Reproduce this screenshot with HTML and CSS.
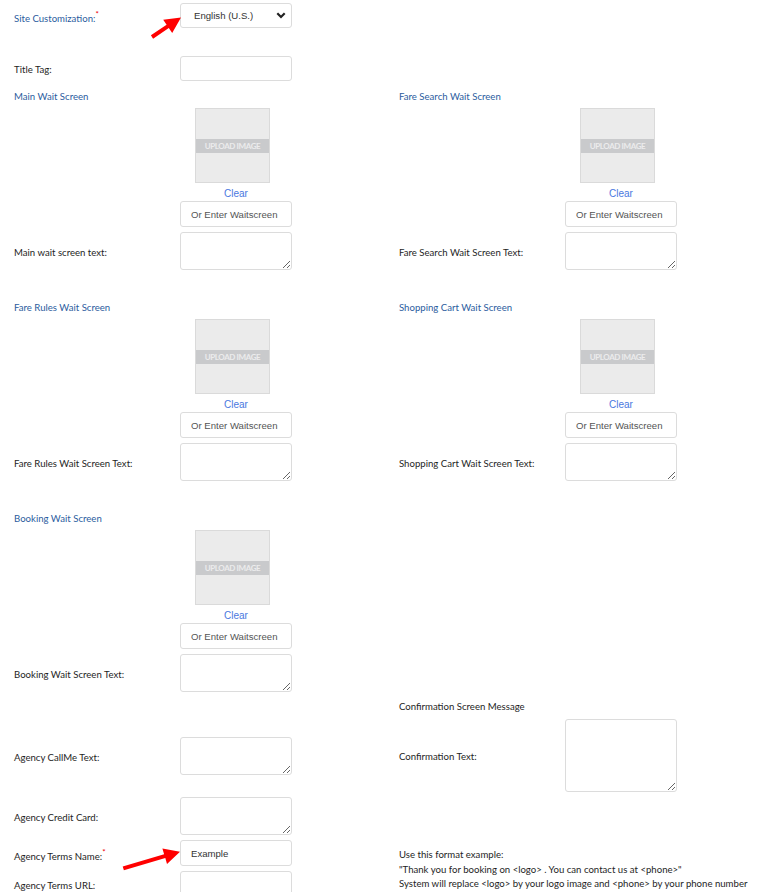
FILE: index.html
```html
<!DOCTYPE html>
<html lang="en">
<head>
    <meta charset="UTF-8">
    <meta name="viewport" content="width=device-width, initial-scale=1.0">
    <title>Site Customization</title>
    <link rel="stylesheet" href="styles.css">
</head>
<body>
<div class="page">
    <div class="row">
        <div class="lbl blue">Site Customization:<span class="req">*</span></div>
        <div class="select-box">
            <span>English (U.S.)</span>
            <svg class="chev" width="10" height="7" viewBox="0 0 10 7"><path d="M1.3 1.3 L5 5 L8.7 1.3" fill="none" stroke="#222" stroke-width="2.2"/></svg>
        </div>
    </div>

    <div class="row title-row">
        <div class="lbl">Title Tag:</div>
        <input class="txt" type="text">
    </div>

    <div class="pair">
        <div class="wait-block">
            <div class="sec-title">Main Wait Screen</div>
            <div class="upload">
                <div class="up-box"><span>UPLOAD IMAGE</span></div>
                <a class="clear">Clear</a>
                <input class="txt tall" type="text" placeholder="Or Enter Waitscreen">
            </div>
            <div class="row area-row">
                <div class="lbl">Main wait screen text:</div>
                <textarea class="area"></textarea>
            </div>
        </div>
        <div class="wait-block">
            <div class="sec-title">Fare Search Wait Screen</div>
            <div class="upload">
                <div class="up-box"><span>UPLOAD IMAGE</span></div>
                <a class="clear">Clear</a>
                <input class="txt tall" type="text" placeholder="Or Enter Waitscreen">
            </div>
            <div class="row area-row">
                <div class="lbl">Fare Search Wait Screen Text:</div>
                <textarea class="area"></textarea>
            </div>
        </div>
    </div>

    <div class="pair">
        <div class="wait-block">
            <div class="sec-title">Fare Rules Wait Screen</div>
            <div class="upload">
                <div class="up-box"><span>UPLOAD IMAGE</span></div>
                <a class="clear">Clear</a>
                <input class="txt tall" type="text" placeholder="Or Enter Waitscreen">
            </div>
            <div class="row area-row">
                <div class="lbl">Fare Rules Wait Screen Text:</div>
                <textarea class="area"></textarea>
            </div>
        </div>
        <div class="wait-block">
            <div class="sec-title">Shopping Cart Wait Screen</div>
            <div class="upload">
                <div class="up-box"><span>UPLOAD IMAGE</span></div>
                <a class="clear">Clear</a>
                <input class="txt tall" type="text" placeholder="Or Enter Waitscreen">
            </div>
            <div class="row area-row">
                <div class="lbl">Shopping Cart Wait Screen Text:</div>
                <textarea class="area"></textarea>
            </div>
        </div>
    </div>

    <div class="pair">
        <div class="wait-block">
            <div class="sec-title">Booking Wait Screen</div>
            <div class="upload">
                <div class="up-box"><span>UPLOAD IMAGE</span></div>
                <a class="clear">Clear</a>
                <input class="txt tall" type="text" placeholder="Or Enter Waitscreen">
            </div>
            <div class="row area-row">
                <div class="lbl">Booking Wait Screen Text:</div>
                <textarea class="area"></textarea>
            </div>
        </div>
        <div></div>
    </div>

    <div class="pair last">
        <div class="left-stack">
            <div class="row">
                <div class="lbl">Agency CallMe Text:</div>
                <textarea class="area"></textarea>
            </div>
            <div class="row credit">
                <div class="lbl">Agency Credit Card:</div>
                <textarea class="area"></textarea>
            </div>
            <div class="row small-gap">
                <div class="lbl">Agency Terms Name:<span class="req">*</span></div>
                <input class="txt tall" type="text" value="Example">
            </div>
            <div class="row small-gap">
                <div class="lbl">Agency Terms URL:</div>
                <input class="txt tall" type="text">
            </div>
        </div>
        <div class="right-stack">
            <div class="plain-title">Confirmation Screen Message</div>
            <div class="row confirm">
                <div class="lbl">Confirmation Text:</div>
                <textarea class="area big"></textarea>
            </div>
            <div class="note">
                Use this format example:<br>
                "Thank you for booking on &lt;logo&gt; . You can contact us at &lt;phone&gt;"<br>
                System will replace &lt;logo&gt; by your logo image and &lt;phone&gt; by your phone number
            </div>
        </div>
    </div>
</div>

<!-- red pointer arrows drawn over the form -->
<svg class="arrows" width="784" height="892" viewBox="0 0 784 892">
    <polygon fill="#f00" points="153.1,38.7 168.8,28.1 172.2,33.0 181,17.5 163.2,19.8 166.6,24.7 150.9,35.3"/>
    <polygon fill="#f00" points="123.9,870.2 165.3,858.1 167.0,863.9 180,851.7 162.4,848.5 164.1,854.3 122.7,866.4"/>
</svg>
</body>
</html>
```

FILE: styles.css
```css
body {
    margin: 0;
    background: #fff;
    font-family: Lato, "Open Sans", sans-serif;
    font-size: 9.6px;
    color: #1e1e1e;
    position: relative;
}
.page {
    padding: 3px 0 0 14px;
}
.row {
    display: flex;
    align-items: center;
}
.lbl {
    width: 166px;
    flex: none;
    padding-top: 2px;
}
.blue {
    color: #2b5c9e;
}
.req {
    color: #e00;
    font-size: 8px;
    vertical-align: 5px;
}
.select-box {
    width: 112px;
    height: 25px;
    box-sizing: border-box;
    border: 1px solid #dcdcdc;
    border-radius: 3px;
    display: flex;
    align-items: center;
    padding-left: 13px;
    font-family: "Liberation Sans", Arial, sans-serif;
    font-size: 9.6px;
    color: #333;
}
.chev {
    margin-left: auto;
    margin-right: 5px;
}
.txt {
    width: 112px;
    height: 25px;
    box-sizing: border-box;
    border: 1px solid #dcdcdc;
    border-radius: 3px;
    padding: 0 10px;
    margin: 0;
    font-family: "Liberation Sans", Arial, sans-serif;
    font-size: 9.6px;
    color: #333;
    outline: none;
}
.txt.tall {
    height: 26px;
}
.txt::placeholder {
    color: #555;
}
.area {
    width: 112px;
    height: 38px;
    box-sizing: border-box;
    border: 1px solid #dcdcdc;
    border-radius: 3px;
    margin: 0;
    padding: 4px;
    font-family: "Liberation Sans", Arial, sans-serif;
    font-size: 10px;
    display: block;
}
.area.big {
    height: 73px;
}
.title-row {
    margin-top: 28px;
}
.pair {
    display: grid;
    grid-template-columns: 385px 385px;
    margin-top: 32px;
}
.title-row + .pair {
    margin-top: 10px;
}
.sec-title {
    color: #2b5c9e;
    line-height: 12px;
    height: 12px;
}
.upload {
    margin-left: 166px;
    width: 112px;
}
.up-box {
    margin: 5px 0 0 15px;
    width: 75px;
    height: 75px;
    box-sizing: border-box;
    border: 1px solid #dadada;
    background: #ebebeb;
    display: flex;
    align-items: center;
}
.up-box span {
    display: block;
    width: 100%;
    height: 14px;
    line-height: 14px;
    background: #c9cacc;
    color: #ececec;
    font-weight: 700;
    font-size: 8px;
    letter-spacing: -0.4px;
    text-align: center;
}
.clear {
    display: block;
    margin-top: 5px;
    line-height: 12px;
    text-align: center;
    color: #4a78e0;
    font-family: "Liberation Sans", Arial, sans-serif;
    font-size: 10px;
}
.upload .txt {
    margin-top: 1px;
    display: block;
}
.area-row {
    margin-top: 5px;
}
.pair.last {
    margin-top: 0;
}
.left-stack {
    padding-top: 45px;
}
.credit {
    margin-top: 22px;
}
.small-gap {
    margin-top: 5px;
}
.plain-title {
    margin-top: 9px;
    line-height: 12px;
}
.confirm {
    margin-top: 6px;
}
.note {
    margin-top: 56px;
    line-height: 14.5px;
    white-space: nowrap;
}
.arrows {
    position: absolute;
    top: 0;
    left: 0;
    pointer-events: none;
}
```
